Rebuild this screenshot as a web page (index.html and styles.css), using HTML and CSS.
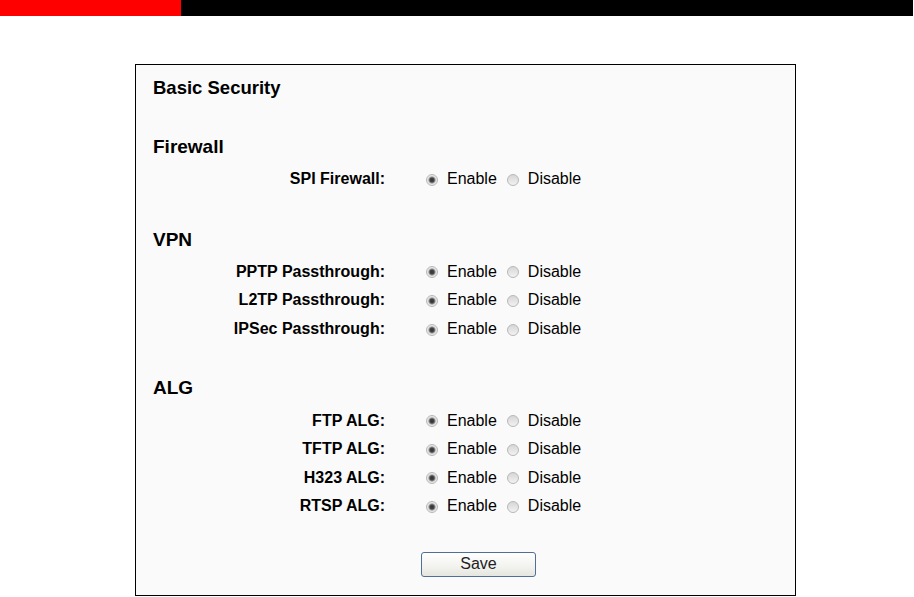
FILE: index.html
```html
<!DOCTYPE html>
<html lang="en">
<head>
    <meta charset="UTF-8">
    <title>Basic Security</title>
    <link rel="stylesheet" href="styles.css">
</head>
<body>
    <div class="topbar">
        <div class="topbar-red"></div>
        <div class="topbar-black"></div>
    </div>

    <div class="panel">
        <div class="panel-title">Basic Security</div>

        <!-- Firewall -->
        <div class="section">
            <div class="section-title">Firewall</div>
            <div class="row">
                <span class="label">SPI Firewall:</span>
                <span class="opts">
                    <input type="radio" name="spi" checked><span class="opt">Enable</span>
                    <input type="radio" name="spi"><span class="opt">Disable</span>
                </span>
            </div>
        </div>

        <!-- VPN -->
        <div class="section section-vpn">
            <div class="section-title">VPN</div>
            <div class="row">
                <span class="label">PPTP Passthrough:</span>
                <span class="opts">
                    <input type="radio" name="pptp" checked><span class="opt">Enable</span>
                    <input type="radio" name="pptp"><span class="opt">Disable</span>
                </span>
            </div>
            <div class="row">
                <span class="label">L2TP Passthrough:</span>
                <span class="opts">
                    <input type="radio" name="l2tp" checked><span class="opt">Enable</span>
                    <input type="radio" name="l2tp"><span class="opt">Disable</span>
                </span>
            </div>
            <div class="row">
                <span class="label">IPSec Passthrough:</span>
                <span class="opts">
                    <input type="radio" name="ipsec" checked><span class="opt">Enable</span>
                    <input type="radio" name="ipsec"><span class="opt">Disable</span>
                </span>
            </div>
        </div>

        <!-- ALG -->
        <div class="section section-alg">
            <div class="section-title">ALG</div>
            <div class="row">
                <span class="label">FTP ALG:</span>
                <span class="opts">
                    <input type="radio" name="ftp" checked><span class="opt">Enable</span>
                    <input type="radio" name="ftp"><span class="opt">Disable</span>
                </span>
            </div>
            <div class="row">
                <span class="label">TFTP ALG:</span>
                <span class="opts">
                    <input type="radio" name="tftp" checked><span class="opt">Enable</span>
                    <input type="radio" name="tftp"><span class="opt">Disable</span>
                </span>
            </div>
            <div class="row">
                <span class="label">H323 ALG:</span>
                <span class="opts">
                    <input type="radio" name="h323" checked><span class="opt">Enable</span>
                    <input type="radio" name="h323"><span class="opt">Disable</span>
                </span>
            </div>
            <div class="row">
                <span class="label">RTSP ALG:</span>
                <span class="opts">
                    <input type="radio" name="rtsp" checked><span class="opt">Enable</span>
                    <input type="radio" name="rtsp"><span class="opt">Disable</span>
                </span>
            </div>
        </div>

        <div class="button-row">
            <button class="save-button">Save</button>
        </div>
    </div>
</body>
</html>
```

FILE: styles.css
```css
body {
    margin: 0;
    background: #ffffff;
    font-family: "Liberation Sans", Arial, sans-serif;
    color: #000000;
}
.topbar {
    display: flex;
    height: 16px;
    width: 913px;
}
.topbar-red {
    width: 181px;
    background: #ff0000;
}
.topbar-black {
    flex: 1;
    background: #000000;
}
.panel {
    margin: 48px 0 0 135px;
    border: 1px solid #000000;
    background: #fafafa;
    padding: 11px 0 0 17px;
    width: 642px;
    height: 519px;
}
.panel-title {
    font-size: 18.5px;
    font-weight: bold;
    line-height: 24px;
    height: 24px;
}
.section {
    margin-top: 35px;
}
.section-vpn {
    margin-top: 34px;
}
.section-alg {
    margin-top: 33px;
}
.section-title {
    font-size: 19px;
    font-weight: bold;
    line-height: 24px;
    height: 24px;
    margin-bottom: 6px;
}
.row {
    display: flex;
    align-items: center;
    height: 28.6px;
    font-size: 16px;
}
.label {
    width: 232px;
    text-align: right;
    font-weight: bold;
}
.opts {
    display: flex;
    align-items: center;
    margin-left: 41px;
}
.opts input[type="radio"] {
    -webkit-appearance: none;
    appearance: none;
    width: 12px;
    height: 12px;
    margin: 1px 9px 0 0;
    border-radius: 50%;
    border: 1px solid #b8b8b8;
    box-sizing: border-box;
    background: linear-gradient(180deg, #d6d6d6 0%, #f2f2f2 100%);
}
.opts input[type="radio"]:checked {
    background: radial-gradient(circle, #333333 0, #444444 2px, #8f8f8f 3px, #e2e2e2 4px, #f0f0f0 6px);
}
.opt {
    margin-right: 10px;
}
.button-row {
    margin-top: 31px;
    padding-left: 268px;
}
.save-button {
    width: 115px;
    height: 25px;
    border: 1px solid #4f6f98;
    border-radius: 3px;
    background: linear-gradient(180deg, #ffffff 0%, #f2f2ee 60%, #e6e6e0 100%);
    font-family: "Liberation Sans", Arial, sans-serif;
    font-size: 16px;
    color: #222222;
    padding: 0;
}
```
